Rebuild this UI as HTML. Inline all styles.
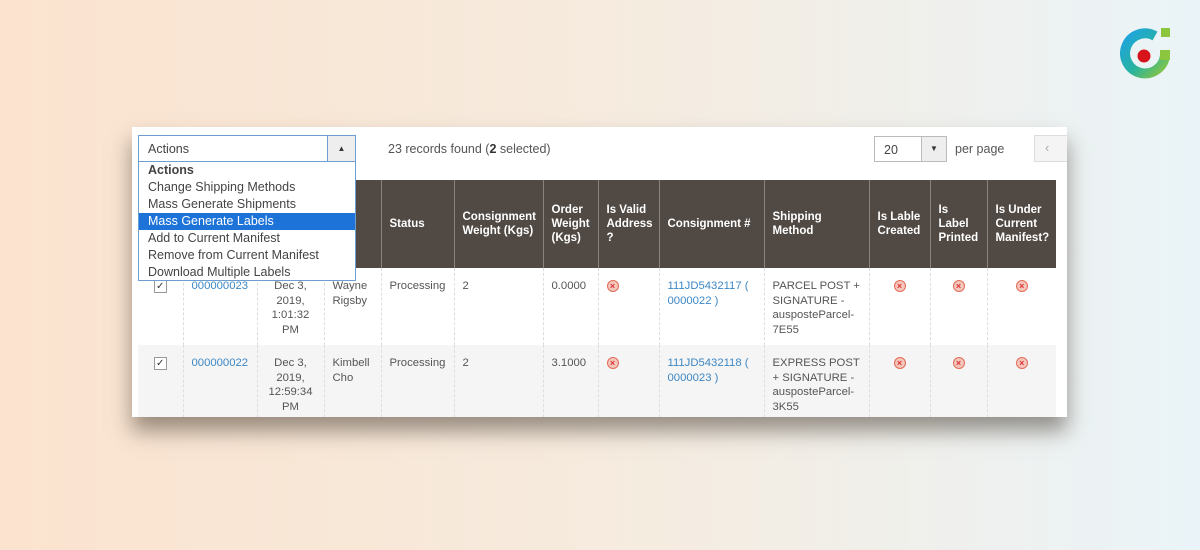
<!DOCTYPE html>
<html><head><meta charset="utf-8"><style>
*{margin:0;padding:0;box-sizing:border-box}
body{width:1200px;height:550px;overflow:hidden;position:relative;font-family:"Liberation Sans",sans-serif;
background:linear-gradient(90deg,#fbe3cf 0%,#f6ebde 50%,#eaf4f8 100%);}
.panel{position:absolute;left:132px;top:127px;width:935px;height:290px;background:#fff;box-shadow:0 14px 20px rgba(60,50,40,.5);overflow:hidden}
.a{position:absolute}
table{position:absolute;left:6px;top:53px;border-collapse:collapse;font-size:11.3px;color:#444;table-layout:fixed;width:918px}
th{background:#514943;color:#fff;font-weight:bold;text-align:left;padding:0 8px;border-left:1px solid #8a817b;height:88px;font-size:11.5px;line-height:14px;vertical-align:middle}
td{vertical-align:top;padding:11px 8px 0;border-left:1px dashed #ddd;line-height:14.5px;color:#555}
tr.r1 td{height:77px;background:#fff}
tr.r2 td{height:72px;background:#f5f5f5}
.lnk{color:#3d87c4}
.x{display:inline-block;width:12px;height:12px;border-radius:50%;background:#f4c7bd;border:1px solid #e26a55;color:#d33;font-size:9px;line-height:10px;text-align:center;font-weight:bold}
.cb{display:inline-block;width:13px;height:13px;border:1px solid #999;background:#fff;font-size:10px;line-height:11px;text-align:center;color:#333}
.c{text-align:center}
.dd div{padding-left:9px}
</style></head><body>
<svg class="a" style="left:1115px;top:25px" width="60" height="60" viewBox="0 0 60 60">
<defs><linearGradient id="g" x1="0" y1="0" x2="1" y2="1"><stop offset="0" stop-color="#1ea3e0"/><stop offset=".55" stop-color="#26b3a0"/><stop offset="1" stop-color="#8cc63f"/></linearGradient></defs>
<path d="M40 11 A20 20 0 1 0 50 30" fill="none" stroke="url(#g)" stroke-width="10"/>
<path d="M45 30 L55 30" stroke="#8cc63f" stroke-width="10"/>
<rect x="46" y="3" width="9" height="9" fill="#8cc63f"/>
<circle cx="29" cy="31" r="6.5" fill="#d7141a"/>
</svg>
<div class="panel">
<table>
<tr><th style="width:45px;border-left:none"></th><th style="width:74px"></th><th style="width:67px"></th><th style="width:57px">to<br>ne</th><th style="width:73px">Status</th><th style="width:89px">Consignment Weight (Kgs)</th><th style="width:55px">Order Weight (Kgs)</th><th style="width:61px">Is Valid Address ?</th><th style="width:105px">Consignment #</th><th style="width:105px">Shipping Method</th><th style="width:61px">Is Lable Created</th><th style="width:57px">Is Label Printed</th><th style="width:69px">Is Under Current Manifest?</th></tr>
<tr class="r1"><td class="c" style="border-left:none"><span class="cb">✓</span></td><td class="lnk">000000023</td><td class="c">Dec 3, 2019, 1:01:32 PM</td><td>Wayne Rigsby</td><td>Processing</td><td>2</td><td>0.0000</td><td><span class="x">×</span></td><td class="lnk">111JD5432117 ( 0000022 )</td><td>PARCEL POST + SIGNATURE - ausposteParcel-7E55</td><td class="c"><span class="x">×</span></td><td class="c"><span class="x">×</span></td><td class="c"><span class="x">×</span></td></tr>
<tr class="r2"><td class="c" style="border-left:none"><span class="cb">✓</span></td><td class="lnk">000000022</td><td class="c">Dec 3, 2019, 12:59:34 PM</td><td>Kimbell Cho</td><td>Processing</td><td>2</td><td>3.1000</td><td><span class="x">×</span></td><td class="lnk">111JD5432118 ( 0000023 )</td><td>EXPRESS POST + SIGNATURE - ausposteParcel-3K55</td><td class="c"><span class="x">×</span></td><td class="c"><span class="x">×</span></td><td class="c"><span class="x">×</span></td></tr>
</table>
<div class="a" style="left:6px;top:8px;width:218px;height:27px;border:1px solid #6c9fd0;background:#fff;font-size:12.5px;color:#444;padding:6px 9px">Actions</div>
<div class="a" style="left:195px;top:8px;width:29px;height:27px;border:1px solid #6c9fd0;background:#eee;font-size:8px;text-align:center;line-height:25px;color:#333">▲</div>
<div class="a dd" style="left:6px;top:35px;width:218px;height:119px;border:1px solid #6c9fd0;border-top:none;background:#fff;font-size:12.5px;color:#444;line-height:17px">
<div style="font-weight:bold">Actions</div>
<div>Change Shipping Methods</div>
<div>Mass Generate Shipments</div>
<div style="background:#1e73d8;color:#fff">Mass Generate Labels</div>
<div>Add to Current Manifest</div>
<div>Remove from Current Manifest</div>
<div>Download Multiple Labels</div>
</div>
<div class="a" style="left:256px;top:15px;font-size:12.5px;color:#555">23 records found (<b style="color:#333">2</b> selected)</div>
<div class="a" style="left:742px;top:9px;width:48px;height:26px;border:1px solid #bbb;font-size:12.5px;color:#444;padding:6px 9px">20</div>
<div class="a" style="left:789px;top:9px;width:26px;height:26px;border:1px solid #bbb;background:#eee;font-size:8px;text-align:center;line-height:24px;color:#333">▼</div>
<div class="a" style="left:823px;top:15px;font-size:12.5px;color:#555">per page</div>
<div class="a" style="left:902px;top:8px;width:40px;height:27px;border:1px solid #ddd;background:#f4f4f4;font-size:13px;color:#aaa;padding:4px 10px">‹</div>
</div>
</body></html>
